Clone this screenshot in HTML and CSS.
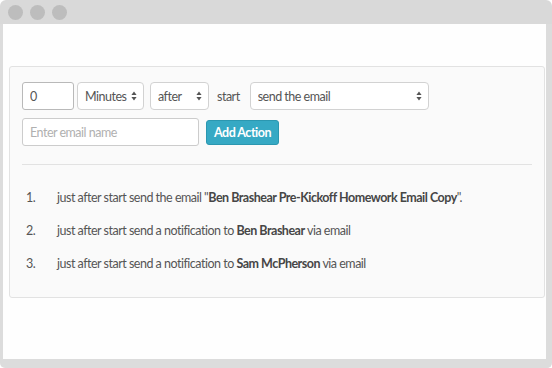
FILE: index.html
```html
<!DOCTYPE html>
<html lang="en">
<head>
<meta charset="UTF-8">
<meta name="viewport" content="width=device-width, initial-scale=1.0">
<title>Email Actions</title>
<link rel="stylesheet" href="styles.css">
</head>
<body>

<div class="window">
    <div class="titlebar">
        <span class="dot"></span>
        <span class="dot"></span>
        <span class="dot"></span>
    </div>
    <div class="window-body">
        <div class="panel">
            <form class="action-form">
                <div class="form-row">
                    <input type="text" class="field field-delay" value="0">
                    <span class="select-wrap select-unit">
                        <select class="field">
                            <option>Minutes</option>
                            <option>Hours</option>
                            <option>Days</option>
                        </select>
                        <svg class="arrows" width="6" height="10" viewBox="0 0 6 10"><path d="M3 0.5 L5.6 4 H0.4 Z M3 9.5 L5.6 6 H0.4 Z" fill="#555"/></svg>
                    </span>
                    <span class="select-wrap select-when">
                        <select class="field">
                            <option>after</option>
                            <option>before</option>
                        </select>
                        <svg class="arrows" width="6" height="10" viewBox="0 0 6 10"><path d="M3 0.5 L5.6 4 H0.4 Z M3 9.5 L5.6 6 H0.4 Z" fill="#555"/></svg>
                    </span>
                    <span class="form-label">start</span>
                    <span class="select-wrap select-action">
                        <select class="field">
                            <option>send the email</option>
                            <option>send a notification</option>
                        </select>
                        <svg class="arrows" width="6" height="10" viewBox="0 0 6 10"><path d="M3 0.5 L5.6 4 H0.4 Z M3 9.5 L5.6 6 H0.4 Z" fill="#555"/></svg>
                    </span>
                </div>
                <div class="form-row">
                    <input type="text" class="field field-name" placeholder="Enter email name">
                    <button type="button" class="btn-add">Add Action</button>
                </div>
            </form>

            <hr class="divider">

            <ol class="actions">
                <li>just after start send the email "<b>Ben Brashear Pre-Kickoff Homework Email Copy</b>".</li>
                <li>just after start send a notification to <b>Ben Brashear</b> via email</li>
                <li>just after start send a notification to <b>Sam McPherson</b> via email</li>
            </ol>
        </div>
    </div>
</div>

</body>
</html>
```

FILE: styles.css
```css
body {
    font-family: Lato, "Open Sans", sans-serif;
    margin: 0;
    padding: 0;
    background-color: #ffffff;
    color: #555555;
}
.window {
    height: 368px;
    display: flex;
    flex-direction: column;
}
.titlebar {
    height: 24px;
    flex-shrink: 0;
    display: flex;
    align-items: center;
    gap: 7px;
    padding-left: 8px;
    background-color: #d9d9d9;
    border-radius: 6px 6px 0 0;
}
.dot {
    width: 15px;
    height: 15px;
    border-radius: 50%;
    background-color: #bdbdbd;
}
.window-body {
    flex: 1;
    background-color: #fefefe;
    border-left: 3px solid #dcdcdc;
    border-right: 6px solid #dcdcdc;
    border-bottom: 9px solid #dcdcdc;
    border-radius: 0 0 5px 5px;
    padding: 42px 1px 0 6px;
}
.panel {
    background-color: #fafafa;
    border: 1px solid #e2e2e2;
    border-radius: 3px;
    padding: 15px 12px 17px 12px;
}
.form-row {
    display: flex;
    align-items: center;
}
.form-row + .form-row {
    margin-top: 8px;
}
.field {
    height: 28px;
    box-sizing: border-box;
    border: 1px solid #cccccc;
    border-radius: 3px;
    background-color: #ffffff;
    font-family: Lato, sans-serif;
    font-size: 12.5px;
    letter-spacing: -0.5px;
    color: #555555;
    padding: 0 7px;
    margin: 0;
    outline: none;
}
.field-delay {
    width: 52px;
    border-color: #b9b9b9;
}
.field-name {
    width: 177px;
}
.field-name::placeholder {
    color: #b0b0b0;
}
.select-wrap {
    position: relative;
    display: inline-block;
    margin-left: 3px;
}
.select-wrap select {
    appearance: none;
    -webkit-appearance: none;
    width: 100%;
    border-color: #d2d2d2;
    border-radius: 4px;
}
.select-wrap .arrows {
    position: absolute;
    right: 7px;
    top: 9px;
    pointer-events: none;
}
.select-unit {
    width: 67px;
}
.select-when {
    width: 59px;
    margin-left: 6px;
}
.select-action {
    width: 179px;
}
.form-label {
    font-size: 12.5px;
    letter-spacing: -0.5px;
    margin: 0 7px 0 8px;
}
.btn-add {
    height: 25px;
    margin-left: 7px;
    padding: 0 7px;
    font-family: Lato, sans-serif;
    font-size: 12.5px;
    letter-spacing: -0.5px;
    font-weight: bold;
    color: #ffffff;
    background-color: #36a9c4;
    border: 1px solid #2b97b0;
    border-radius: 3px;
    cursor: pointer;
}
.divider {
    border: none;
    border-top: 1px solid #e2e2e2;
    margin: 18px 0 16px 0;
}
.actions {
    list-style: none;
    margin: 0;
    padding: 0;
    counter-reset: item;
    font-size: 12.5px;
    letter-spacing: -0.5px;
}
.actions li {
    counter-increment: item;
    line-height: 33px;
}
.actions li::before {
    content: counter(item) ".";
    display: inline-block;
    width: 31px;
    margin-left: 4px;
}
.actions b {
    color: #464646;
}
```
